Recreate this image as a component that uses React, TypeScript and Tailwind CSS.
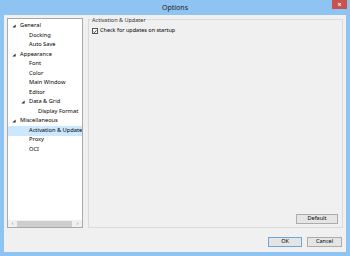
import React from "react";

type Node = { label: string; level: number; expanded?: boolean; selected?: boolean };

const tree: Node[] = [
  { label: "General", level: 0, expanded: true },
  { label: "Docking", level: 1 },
  { label: "Auto Save", level: 1 },
  { label: "Appearance", level: 0, expanded: true },
  { label: "Font", level: 1 },
  { label: "Color", level: 1 },
  { label: "Main Window", level: 1 },
  { label: "Editor", level: 1 },
  { label: "Data & Grid", level: 1, expanded: true },
  { label: "Display Format", level: 2 },
  { label: "Miscellaneous", level: 0, expanded: true },
  { label: "Activation & Updater", level: 1, selected: true },
  { label: "Proxy", level: 1 },
  { label: "OCI", level: 1 },
];

const indent = ["pl-[4px]", "pl-[13px]", "pl-[22px]"];

function Triangle() {
  return (
    <svg width="4" height="4" viewBox="0 0 4 4" className="shrink-0">
      <path d="M3.6 0.4 L3.6 3.6 L0.4 3.6 Z" fill="#2a2a2a" />
    </svg>
  );
}

function Button({ label, primary, className = "" }: { label: string; primary?: boolean; className?: string }) {
  return (
    <button
      type="button"
      className={`flex items-center justify-center border bg-[#e5e5e5] text-[5.5px] leading-none text-black ${
        primary ? "border-[#6aa6e0]" : "border-[#acacac]"
      } ${className}`}
    >
      {label}
    </button>
  );
}

export default function App() {
  return (
    <div
      className="flex h-[256px] w-[350px] flex-col overflow-hidden bg-[#8fc3f1]"
      style={{ fontFamily: '"Noto Sans", "Open Sans", sans-serif' }}
    >
      <div className="relative flex h-[15px] shrink-0 items-center justify-center">
        <span className="text-[7px] leading-none text-[#222]">Options</span>
        <div className="absolute right-[3px] top-0 flex h-[9px] w-[15px] items-center justify-center bg-[#c9514f] text-[7px] font-bold leading-none text-white">
          ×
        </div>
      </div>

      <div className="mx-[4px] mb-[4px] flex flex-1 flex-col bg-[#f0f0f0]">
        <div className="flex gap-[5px] px-[3px] pt-[3px]">
          <div className="flex h-[210px] w-[76px] flex-col border border-[#a9a9a9] bg-white">
            <ul className="flex flex-1 flex-col overflow-hidden pt-[2.5px]">
              {tree.map((node) => (
                <li
                  key={node.label}
                  className={`flex h-[9.5px] items-center whitespace-nowrap text-[5.7px] leading-none text-black ${
                    indent[node.level]
                  } ${node.selected ? "bg-[#cce8ff]" : ""}`}
                >
                  <span className="flex w-[8px] shrink-0 items-center">{node.expanded ? <Triangle /> : null}</span>
                  <span>{node.label}</span>
                </li>
              ))}
            </ul>
            <div className="flex h-[7px] items-center bg-[#f0f0f0] text-[5px] leading-none text-[#606060]">
              <span className="flex w-[9px] justify-center">‹</span>
              <div className="h-[6px] w-[55px] bg-[#cdcdcd]" />
              <span className="ml-auto flex w-[9px] justify-center">›</span>
            </div>
          </div>

          <div className="mt-[1px] flex h-[209px] w-[255px] flex-col border border-[#dadada]">
            <span className="-mt-[3px] ml-[2px] self-start bg-[#f0f0f0] px-[1px] text-[5.5px] leading-[7px] text-[#333]">
              Activation &amp; Updater
            </span>
            <label className="ml-[3px] mt-[4px] flex items-center gap-[2px] text-[5.5px] leading-none text-black">
              <span className="flex h-[6px] w-[6px] items-center justify-center border border-[#555] bg-white">
                <svg width="5" height="5" viewBox="0 0 5 5">
                  <path d="M0.7 2.6 L1.9 3.9 L4.3 0.9" fill="none" stroke="#111" strokeWidth="0.9" />
                </svg>
              </span>
              Check for updates on startup
            </label>
            <Button label="Default" className="mb-[3px] mr-[4px] mt-auto h-[10px] w-[42px] self-end" />
          </div>
        </div>

        <div className="mt-[9px] flex justify-end gap-[5px] pr-[4px]">
          <Button label="OK" primary className="h-[10px] w-[34px]" />
          <Button label="Cancel" className="h-[10px] w-[35px]" />
        </div>
      </div>
    </div>
  );
}
